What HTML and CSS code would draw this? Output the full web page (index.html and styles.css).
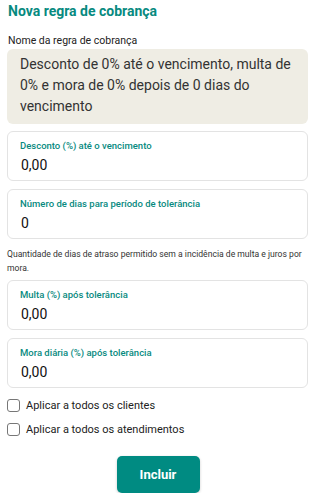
FILE: index.html
```html
<!DOCTYPE html>
<html lang="pt-br">
<head>
<meta charset="UTF-8">
<meta name="viewport" content="width=device-width, initial-scale=1.0">
<link rel="stylesheet" href="styles.css">
<title>Nova regra de cobrança</title>
</head>
<body>

<main class="form">

<h2 class="title">Nova regra de cobrança</h2>

<label class="nameLabel" for="nomeIn">Nome da regra de cobrança</label>
<div class="nameBox" id="nomeIn">Desconto de 0% até o vencimento, multa de 0% e mora de 0% depois de 0 dias do vencimento</div>

<div class="field">
<span class="fieldLabel">Desconto (%) até o vencimento</span>
<span class="fieldValue">0,00</span>
</div>

<div class="field">
<span class="fieldLabel">Número de dias para período de tolerância</span>
<span class="fieldValue">0</span>
</div>

<p class="hint">Quantidade de dias de atraso permitido sem a incidência de multa e juros por mora.</p>

<div class="field">
<span class="fieldLabel">Multa (%) após tolerância</span>
<span class="fieldValue">0,00</span>
</div>

<div class="field">
<span class="fieldLabel">Mora diária (%) após tolerância</span>
<span class="fieldValue">0,00</span>
</div>

<div class="checks">
<label class="check"><span class="box"></span>Aplicar a todos os clientes</label>
<label class="check"><span class="box"></span>Aplicar a todos os atendimentos</label>
</div>

<div class="actions">
<button class="btn">Incluir</button>
</div>

</main>

</body>
</html>
```

FILE: styles.css
```css
*,*:before,*:after{
margin:0;
padding:0;
box-sizing:border-box;
}

:root{
--teal:#078a80;
--text:#1f1f1f;
--border:#e3e3e3;
--name_bg:#efede4;
}

body{
background:#fff;
font-family:Roboto, "Noto Sans", sans-serif;
color:var(--text);
}

.form{
padding:0 6px 0 7px;
display:flex;
flex-direction:column;
}

.title{
color:var(--teal);
font-size:14px;
font-weight:700;
line-height:18px;
padding:2px 0 0 1px;
}

.nameLabel{
font-size:10.5px;
line-height:14px;
margin-top:14px;
padding-left:1px;
color:#222;
}

.nameBox{
margin-top:1px;
background:var(--name_bg);
border-radius:6px;
padding:5px 12px 7px 13px;
font-size:14px;
line-height:21px;
color:#333;
height:75px;
}

.field{
margin-top:8px;
border:1px solid var(--border);
border-radius:6px;
height:50px;
padding:7px 12px 0 12px;
display:flex;
flex-direction:column;
}

.nameBox + .field{
margin-top:7px;
}

.fieldLabel{
color:var(--teal);
font-size:9.5px;
font-weight:500;
line-height:13px;
}

.fieldValue{
font-size:14px;
line-height:20px;
margin-top:3px;
padding-left:1px;
color:#111;
}

.hint{
font-size:8.6px;
line-height:14px;
color:#333;
margin-top:8px;
}

.hint + .field{
margin-top:5px;
}

.checks{
margin-top:11px;
display:flex;
flex-direction:column;
gap:11px;
}

.check{
display:flex;
align-items:center;
gap:6px;
font-size:11px;
line-height:13px;
color:#222;
}

.box{
width:13px;
height:13px;
border:1px solid #777;
border-radius:3px;
background:#fff;
}

.actions{
display:flex;
justify-content:center;
margin-top:20px;
}

.btn{
width:83px;
height:37px;
background:#008b82;
color:#fff;
border:none;
border-radius:5px;
font-family:Roboto, sans-serif;
font-size:13px;
font-weight:700;
box-shadow:0 1px 3px #00000033;
margin-left:1px;
}
```
